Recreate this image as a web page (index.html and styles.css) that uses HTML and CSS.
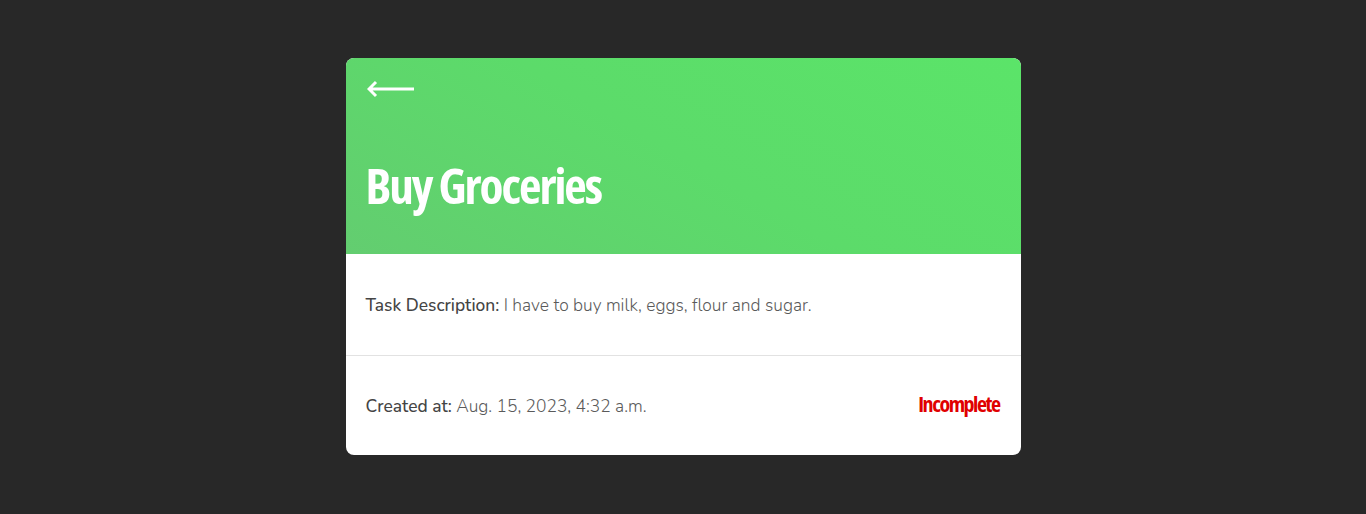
FILE: index.html
```html
<!DOCTYPE html>
<html lang="en">
<head>
<meta charset="utf-8">
<title>Buy Groceries</title>
<link rel="stylesheet" href="styles.css">
</head>
<body>
<div class="card">
  <div class="card-header">
    <a class="back" href="#" aria-label="Back">
      <svg width="48" height="18" viewBox="0 0 48 18">
        <path d="M2 9 H47 M9 2 L2 9 L9 16" fill="none" stroke="#fff" stroke-width="3" stroke-linecap="butt" stroke-linejoin="miter"/>
      </svg>
    </a>
    <h1 class="title">Buy Groceries</h1>
  </div>
  <div class="section">
    <p class="line"><span class="label">Task Description:</span> I have to buy milk, eggs, flour and sugar.</p>
  </div>
  <div class="section footer">
    <p class="line"><span class="label">Created at:</span> Aug. 15, 2023, 4:32 a.m.</p>
    <span class="status">Incomplete</span>
  </div>
</div>
</body>
</html>
```

FILE: styles.css
```css
html, body {
  margin: 0;
  padding: 0;
  background: #282828;
}
body {
  font-family: "Nunito", "Open Sans", "Noto Sans", sans-serif;
  padding-top: 58px;
}
.card {
  width: 675px;
  margin: 0 auto;
  background: #fff;
  border-radius: 8px;
  overflow: hidden;
}
.card-header {
  height: 196px;
  box-sizing: border-box;
  padding: 22px 21px 0 21px;
  background: linear-gradient(30deg, #63cd70 0%, #5cdb6a 50%, #5be469 100%);
  display: flex;
  flex-direction: column;
}
.back {
  display: block;
  width: 48px;
  height: 18px;
  line-height: 0;
}
.title {
  margin: 57px 0 0 -1px;
  font-family: "Open Sans", sans-serif;
  font-stretch: 75%;
  font-weight: bold;
  font-size: 49px;
  line-height: 60px;
  color: #fff;
  letter-spacing: -2px;
}
.section {
  height: 101px;
  box-sizing: border-box;
  padding: 0 20px;
  display: flex;
  align-items: center;
}
.footer {
  height: 100px;
  border-top: 1px solid #e2e2e2;
  justify-content: space-between;
}
.line {
  margin: 0;
  font-size: 17.4px;
  color: #5a5a5a;
  font-weight: 300;
}
.label {
  font-weight: 550;
  color: #444;
}
.status {
  font-family: "Open Sans", sans-serif;
  font-stretch: 75%;
  font-weight: bold;
  font-size: 22px;
  line-height: 22px;
  color: #e00000;
  letter-spacing: -1.5px;
  margin: 0 1px 5px 0;
}
```
